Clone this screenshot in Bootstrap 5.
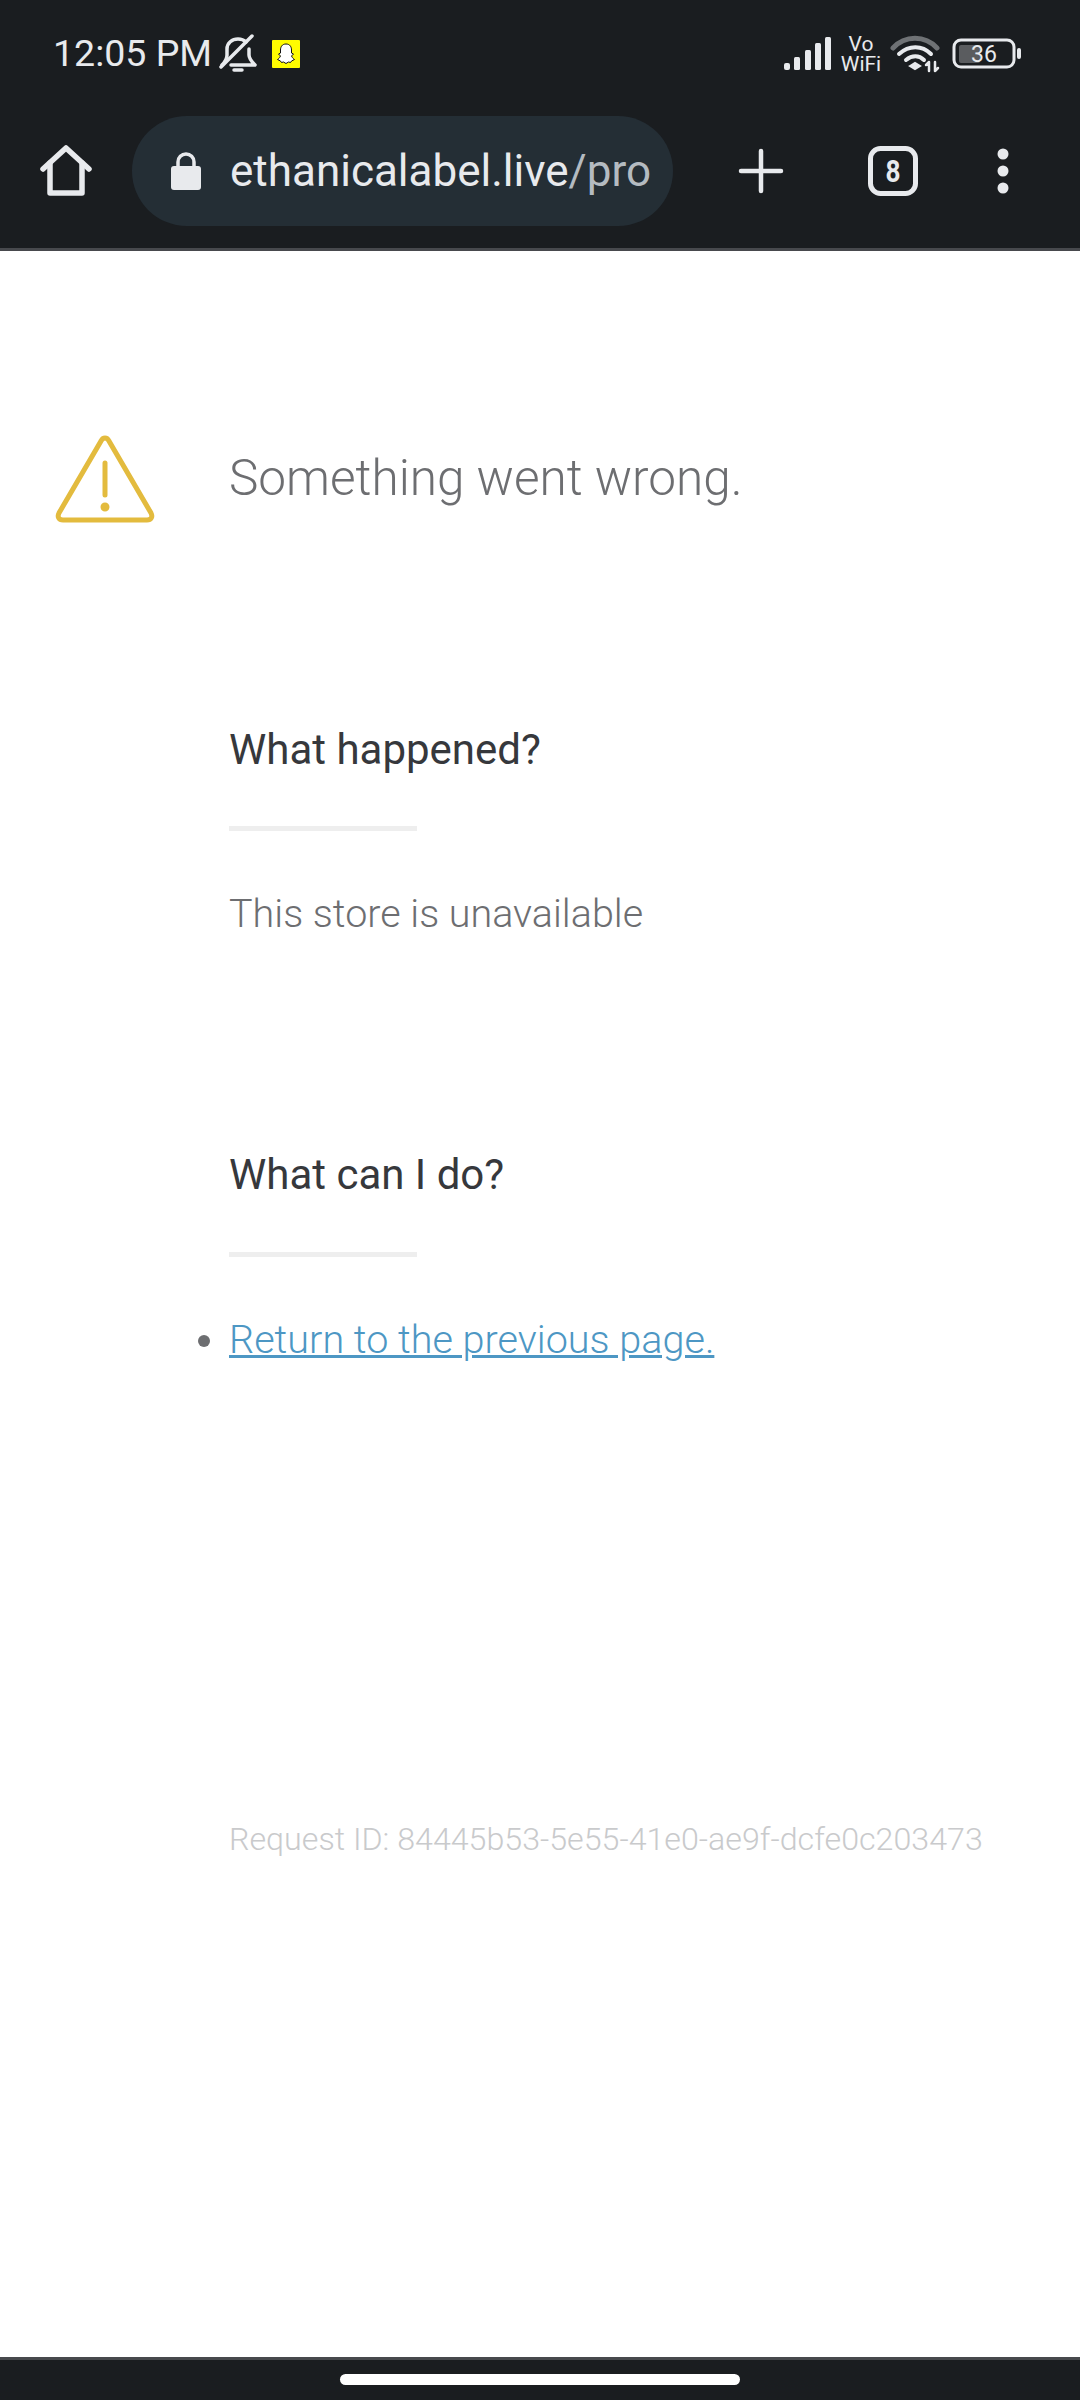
<!DOCTYPE html>
<html lang="en">
<head>
  <meta charset="UTF-8">
  <meta name="viewport" content="width=device-width, initial-scale=1.0">
  <title>Something went wrong</title>
  <link href="https://cdn.jsdelivr.net/npm/bootstrap@5.3.2/dist/css/bootstrap.min.css" rel="stylesheet">
  <style>
    body { font-family: Roboto, "Liberation Sans", sans-serif; background: #fff; }
    .page-wrap { width: 1080px; height: 2400px; }
    .top-chrome { background: #1a1d20; flex: none; border-bottom: 3px solid #47494d; box-sizing: content-box; height: 248px; }
    .status-row { height: 108px; padding: 0 58px 0 53px; color: #e8eaed; }
    .clock { font-size: 37.5px; line-height: 1; }
    .bell-icon { margin-left: 7px; }
    .snap-icon { margin-left: 15px; }
    .status-right { gap: 8px; }
    .wifi-icon { margin-right: 4px; }
    .vowifi { font-size: 21px; line-height: 20px; width: 42px; }
    .tool-row { height: 110px; margin-top: 8px; color: #e8eaed; }
    .home-btn { width: 132px; }
    .url-pill { background: #242e35; width: 541px; height: 110px; padding-left: 39px; font-size: 44px; overflow: hidden; white-space: nowrap; }
    .url-text { margin-left: 29px; }
    .url-path { color: #b4bbc1; }
    .plus-slot { margin-left: 65px; }
    .tabs-slot { margin-left: 84px; }
    .more-slot { margin-left: 79px; }
    .content-area { padding-top: 184px; color: #6d6e71; font-weight: 300; }
    .alert-row { height: 88px; }
    .alert-icon { width: 229px; padding-left: 55px; flex: none; }
    .alert-title { font-size: 49.5px; font-weight: 300; margin: 0; line-height: 1; color: #6d6e71; }
    .info-block { padding-left: 229px; }
    .info-head { font-size: 42px; font-weight: 400; color: #36383c; line-height: 48px; margin: 0; }
    .short-rule { width: 188px; height: 5px; background: #eeeeee; }
    .happened { margin-top: 203px; }
    .rule-one { margin-top: 52px; }
    .info-text { font-size: 39.5px; font-weight: 300; line-height: 44px; margin: 61px 0 0; color: #6d6e71; }
    .can-do { margin-top: 215px; }
    .rule-two { margin-top: 53px; }
    .action-list { margin: 60px 0 0; padding: 0; font-size: 39.6px; line-height: 46px; }
    .action-list li::marker { color: #6d6e71; }
    .action-list a { color: #4d97c4; }
    .request-id { font-size: 32.2px; font-weight: 300; color: #c9cacc; margin-top: 458px; line-height: 36px; white-space: nowrap; }
    .bottom-bar { height: 43px; flex: none; background: #1a1d20; border-top: 3px solid #47494d; padding-top: 14px; }
    .home-pill { width: 400px; height: 11px; background: #fff; border-radius: 6px; }
  </style>
</head>
<body>
  <div class="page-wrap d-flex flex-column">
    <div class="top-chrome">
      <div class="status-row d-flex align-items-center justify-content-between">
        <div class="d-flex align-items-center">
          <span class="clock">12:05 PM</span>
          <svg class="bell-icon" width="38" height="40" viewBox="0 0 38 40" fill="none" stroke="#e8eaed" stroke-width="3.500" stroke-linecap="round" stroke-linejoin="round">
            <path d="M3 31c3-3 5-6 5-10v-6c0-6 5-10 11-10 3 0 6 1 8 3M30 15v6c0 4 3 7 6 10H12"/>
            <path d="M15 36h8"/>
            <path d="M2 33 33 2"/>
          </svg>
          <svg class="snap-icon" width="28" height="28" viewBox="0 0 28 28">
            <rect width="28" height="28" rx="1" fill="#fffc00"/>
            <path d="M14 4c4 0 5.500 3 5.500 6v3l2 1-2 2c1 2 2 3 3 3.500l-3 1.500-1 1.500-2-.5-2.500 1.500-2.500-1.500-2 .5-1-1.500-3-1.500c1-.5 2-1.500 3-3.500l-2-2 2-1v-3c0-3 1.500-6 5.500-6z" fill="#fff" stroke="#111" stroke-width="1"/>
          </svg>
        </div>
        <div class="status-right d-flex align-items-center">
          <svg width="48" height="34" viewBox="0 0 48 34" fill="#e8eaed">
            <rect x="0" y="26" width="6" height="7" rx="2"/>
            <rect x="10" y="20" width="6" height="13" rx="1.500"/>
            <rect x="21" y="13" width="6" height="20" rx="1.500"/>
            <rect x="31" y="6" width="6" height="27" rx="1.500"/>
            <rect x="41" y="0" width="6" height="33" rx="1.500"/>
          </svg>
          <div class="vowifi text-center">Vo<br>WiFi</div>
          <svg class="wifi-icon" width="50" height="38" viewBox="0 0 50 38" fill="none" stroke-linecap="round">
            <path d="M3 13C15 0 35 0 47 13" stroke="#6f7275" stroke-width="5"/>
            <path d="M9 19c10-9 23-9 32 0" stroke="#e8eaed" stroke-width="4"/>
            <path d="M16 25c6-5 13-5 18 0" stroke="#e8eaed" stroke-width="4"/>
            <path d="M20 31l5-3 5 3-5 3z" fill="#e8eaed" stroke="#e8eaed" stroke-width="2"/>
            <path d="M39 36v-9M36 30l3-3M45 27v9M48 33l-3 3" stroke="#e8eaed" stroke-width="2.500"/>
          </svg>
          <svg width="70" height="32" viewBox="0 0 70 32">
            <rect x="2" y="2" width="60" height="27" rx="7" fill="none" stroke="#e8eaed" stroke-width="3"/>
            <rect x="7" y="7" width="21" height="18" rx="2" fill="#5a5c5f"/>
            <rect x="65" y="10" width="4" height="11" rx="2" fill="#e8eaed"/>
            <text x="32" y="24" text-anchor="middle" font-family="Roboto, sans-serif" font-size="23" fill="#e8eaed">36</text>
          </svg>
        </div>
      </div>
      <div class="tool-row d-flex align-items-center">
        <div class="home-btn d-flex justify-content-center">
          <svg width="52" height="52" viewBox="0 0 52 52" fill="none" stroke="#e8eaed" stroke-width="5.500" stroke-linecap="round" stroke-linejoin="round">
            <path d="M3 24 26 3l23 21"/>
            <path d="M10 18v30h32V18"/>
          </svg>
        </div>
        <div class="url-pill rounded-pill d-flex align-items-center">
          <svg width="30" height="38" viewBox="0 0 30 38">
            <path d="M7 16V10a8 8 0 0 1 16 0v6" fill="none" stroke="#e8eaed" stroke-width="3.500"/>
            <rect x="0" y="14" width="30" height="24" rx="3" fill="#e8eaed"/>
          </svg>
          <span class="url-text">ethanicalabel.live<span class="url-path">/pro</span></span>
        </div>
        <div class="plus-slot">
          <svg class="d-block" width="46" height="46" viewBox="0 0 46 46" stroke="#e8eaed" stroke-width="4.500" stroke-linecap="round">
            <path d="M23 3v40M3 23h40"/>
          </svg>
        </div>
        <div class="tabs-slot">
          <svg class="d-block" width="50" height="50" viewBox="0 0 50 50">
            <rect x="2.500" y="2.500" width="45" height="45" rx="10" fill="none" stroke="#e8eaed" stroke-width="5"/>
            <text x="25" y="36" text-anchor="middle" font-family="Roboto, sans-serif" font-weight="700" font-size="32" textLength="15" lengthAdjust="spacingAndGlyphs" fill="#e8eaed">8</text>
          </svg>
        </div>
        <div class="more-slot">
          <svg class="d-block" width="12" height="46" viewBox="0 0 12 46" fill="#e8eaed">
            <circle cx="6" cy="6" r="5.500"/>
            <circle cx="6" cy="23" r="5.500"/>
            <circle cx="6" cy="40" r="5.500"/>
          </svg>
        </div>
      </div>
    </div>

    <main class="content-area flex-grow-1">
      <div class="alert-row d-flex align-items-center">
        <div class="alert-icon">
          <svg class="d-block" width="100" height="88" viewBox="0 0 100 88" fill="none" stroke="#e3bb3e" stroke-width="5" stroke-linecap="round">
            <path d="M46 6c2-4 6-4 8 0l42 72c2 4 0 7-4 7H8c-4 0-6-3-4-7z"/>
            <path d="M50 28v32"/>
            <circle cx="50" cy="72" r="2" fill="#e3bb3e"/>
          </svg>
        </div>
        <h1 class="alert-title">Something went wrong.</h1>
      </div>
      <div class="info-block">
        <h2 class="info-head happened">What happened?</h2>
        <div class="short-rule rule-one"></div>
        <p class="info-text">This store is unavailable</p>
        <h2 class="info-head can-do">What can I do?</h2>
        <div class="short-rule rule-two"></div>
        <ul class="action-list">
          <li><a href="#">Return to the previous page.</a></li>
        </ul>
        <div class="request-id">Request ID: 84445b53-5e55-41e0-ae9f-dcfe0c203473</div>
      </div>
    </main>

    <div class="bottom-bar d-flex justify-content-center">
      <div class="home-pill"></div>
    </div>
  </div>
  <script src="https://cdn.jsdelivr.net/npm/bootstrap@5.3.2/dist/js/bootstrap.bundle.min.js"></script>
</body>
</html>
